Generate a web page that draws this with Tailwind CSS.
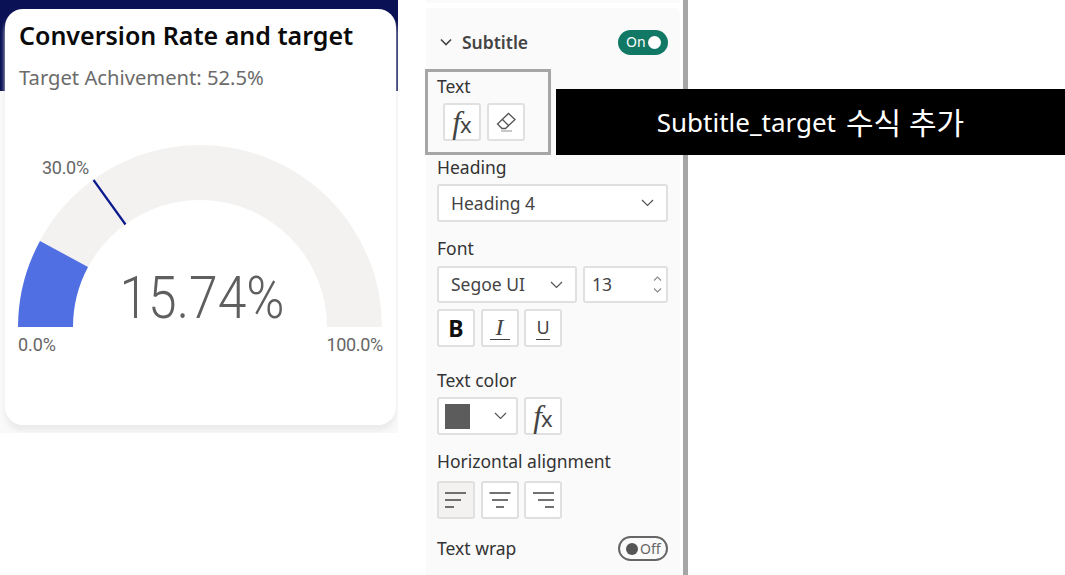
<!DOCTYPE html>
<html>
<head>
    <meta charset="UTF-8">
    <meta name="viewport" content="width=device-width, initial-scale=1.0">
    <title>Subtitle target</title>
    <script src="https://cdn.jsdelivr.net/npm/@tailwindcss/browser@4"></script>
</head>
<body class="bg-white">
<div class="relative w-[1065px] h-[575px] overflow-hidden flex font-['Noto_Sans','Noto_Sans_CJK_KR',sans-serif]">

    <!-- report visual -->
    <div class="w-[398px] h-[433px] overflow-hidden shrink-0 bg-[#f9f9f9] bg-[linear-gradient(#0a1155_91px,transparent_91px)] pt-[9px] pl-[5px]">
        <div class="w-[391px] h-[416px] bg-white rounded-[18px] shadow-[0_6px_4px_#ececec] overflow-hidden">
            <div class="pl-[14px] pt-[7px] text-[25px] leading-[38px] font-semibold text-[#0a0a0a] whitespace-nowrap">Conversion Rate and target</div>
            <div class="pl-[14px] mt-[9px] text-[20.2px] leading-[28px] text-[#6b6b6b] whitespace-nowrap">Target Achivement: 52.5%</div>
            <svg class="block mt-[-5px]" width="391" height="280" viewBox="5 86 391 280">
                <path d="M18 327 A182 182 0 0 1 382 327 L327 327 A127 127 0 0 0 73 327 Z" fill="#f3f2f1"/>
                <path d="M18 327 A182 182 0 0 1 40 241 L88 267 A127 127 0 0 0 73 327 Z" fill="#4f6fe3"/>
                <line x1="93.5" y1="180" x2="125.5" y2="224.5" stroke="#0b1a8c" stroke-width="2.2"/>
                <text x="42" y="174" font-size="18" fill="#666" font-family="Roboto" letter-spacing="-0.3">30.0%</text>
                <text x="18" y="351" font-size="18" fill="#666" font-family="Roboto" letter-spacing="-0.1">0.0%</text>
                <text x="383" y="351" font-size="18" fill="#666" font-family="Roboto" text-anchor="end" letter-spacing="-0.3">100.0%</text>
                <text x="202" y="318" font-size="60" font-weight="300" fill="#5f5f5f" font-family="Roboto" text-anchor="middle" textLength="165" lengthAdjust="spacingAndGlyphs">15.74%</text>
            </svg>
        </div>
    </div>

    <!-- format pane -->
    <div class="ml-[28px] w-[262px] h-full shrink-0 border-r-[5px] border-[#a6a6a6] bg-white text-[#333]">
        <div class="h-[3px] bg-[#fafafa] w-[254px]"></div>
        <div class="mt-[5px] w-[254px] h-[567px] bg-[#fafafa] rounded-tr-[6px] pl-[11px]">
            <div class="pt-[22px] h-[46px] w-[231px] flex items-center justify-between">
                <div class="flex items-center gap-[10px] pl-[3px]">
                    <svg width="12" height="8" viewBox="0 0 12 8" fill="none" stroke="#444" stroke-width="1.6"><path d="M1 1.5 L6 6.5 L11 1.5"/></svg>
                    <span class="text-[17.5px] font-semibold text-[#444] leading-[24px]">Subtitle</span>
                </div>
                <div class="w-[50px] h-[25px] rounded-full bg-[#117865] flex items-center justify-between pl-[8px] pr-[7px]">
                    <span class="text-[14px] leading-none text-white">On</span>
                    <span class="w-[13px] h-[13px] rounded-full bg-white"></span>
                </div>
            </div>

            <div class="mt-[15px] ml-[-12px] w-[126px] h-[86px] border-[3px] border-[#a6a6a6] pl-[9px] pt-[4px]">
                <div class="h-[20px] text-[17.5px] leading-[20px]">Text</div>
                <div class="mt-[7px] ml-[6px] flex gap-[6px]">
                    <button class="w-[38px] h-[38px] bg-white border-2 border-[#e0e0e0] rounded-[3px] flex items-center justify-center text-[#444]">
                        <span class="font-['Liberation_Serif'] italic text-[31px] leading-none">f</span><span class="text-[22px] leading-none mt-[4px] ml-[-1px]">x</span>
                    </button>
                    <button class="w-[38px] h-[38px] bg-white border-2 border-[#e0e0e0] rounded-[3px] flex items-center justify-center">
                        <svg width="24" height="24" viewBox="0 0 24 24" fill="none" stroke="#555" stroke-width="1.3"><path d="M14.5 3.5 L21 9.5 L11.5 18.5 H8 L3.5 14 Z M8.5 9.5 L15 16"/><path d="M7 21 H18" stroke="#aaa"/></svg>
                    </button>
                </div>
            </div>

            <div class="mt-[2px] h-[20px] text-[17.5px] leading-[20px]">Heading</div>
            <div class="mt-[7px] w-[231px] h-[38px] bg-white border-2 border-[#e0e0e0] rounded-[3px] flex items-center justify-between pl-[12px] pr-[12px]">
                <span class="text-[17.5px] text-[#444]">Heading 4</span>
                <svg width="13" height="8" viewBox="0 0 13 8" fill="none" stroke="#555" stroke-width="1.2"><path d="M1 1 L6.5 6.5 L12 1"/></svg>
            </div>

            <div class="mt-[16px] h-[20px] text-[17.5px] leading-[20px]">Font</div>
            <div class="mt-[8px] flex gap-[6px]">
                <div class="w-[140px] h-[37px] bg-white border-2 border-[#e0e0e0] rounded-[3px] flex items-center justify-between pl-[12px] pr-[12px]">
                    <span class="text-[17.5px] text-[#444]">Segoe UI</span>
                    <svg width="13" height="8" viewBox="0 0 13 8" fill="none" stroke="#555" stroke-width="1.2"><path d="M1 1 L6.5 6.5 L12 1"/></svg>
                </div>
                <div class="w-[85px] h-[37px] bg-white border-2 border-[#e0e0e0] rounded-[3px] flex items-center justify-between pl-[7px] pr-[4px]">
                    <span class="text-[17.5px] text-[#444]">13</span>
                    <div class="flex flex-col gap-[7px]">
                        <svg width="9" height="5" viewBox="0 0 9 5" fill="none" stroke="#888" stroke-width="1.1"><path d="M1 4.5 L4.5 1 L8 4.5"/></svg>
                        <svg width="9" height="5" viewBox="0 0 9 5" fill="none" stroke="#888" stroke-width="1.1"><path d="M1 .5 L4.5 4 L8 .5"/></svg>
                    </div>
                </div>
            </div>
            <div class="mt-[6px] flex gap-[5.5px]">
                <button class="w-[38px] h-[38px] bg-white border-2 border-[#e0e0e0] rounded-[3px] text-[23px] font-bold leading-none text-[#111]">B</button>
                <button class="w-[38px] h-[38px] bg-white border-2 border-[#e0e0e0] rounded-[3px] flex items-center justify-center text-[#444]">
                    <span class="w-[20px] h-[24px] border-b border-[#444] font-['Liberation_Serif'] italic text-[24px] leading-[22px] text-center">I</span>
                </button>
                <button class="w-[38px] h-[38px] bg-white border-2 border-[#e0e0e0] rounded-[3px] flex items-center justify-center text-[#444]">
                    <span class="w-[14px] h-[23px] border-b border-[#444] text-[18px] leading-[20px] text-center">U</span>
                </button>
            </div>

            <div class="mt-[23px] h-[20px] text-[17.5px] leading-[20px]">Text color</div>
            <div class="mt-[7px] flex gap-[6px]">
                <div class="w-[81px] h-[38px] bg-white border-2 border-[#e0e0e0] rounded-[3px] flex items-center justify-between pl-[6px] pr-[9px]">
                    <span class="w-[25px] h-[25px] bg-[#5c5c5c]"></span>
                    <svg width="13" height="8" viewBox="0 0 13 8" fill="none" stroke="#555" stroke-width="1.2"><path d="M1 1 L6.5 6.5 L12 1"/></svg>
                </div>
                <button class="w-[38px] h-[38px] bg-white border-2 border-[#e0e0e0] rounded-[3px] flex items-center justify-center text-[#444]">
                    <span class="font-['Liberation_Serif'] italic text-[31px] leading-none">f</span><span class="text-[22px] leading-none mt-[4px] ml-[-1px]">x</span>
                </button>
            </div>

            <div class="mt-[16px] h-[20px] text-[17.5px] leading-[20px] whitespace-nowrap">Horizontal alignment</div>
            <div class="mt-[10px] flex gap-[5.5px]">
                <button class="w-[38px] h-[38px] bg-[#f3f2f1] border-2 border-[#e0e0e0] rounded-[3px] flex items-center justify-center">
                    <svg width="24" height="18" viewBox="0 0 24 18" stroke="#444" stroke-width="1.6"><path d="M1 2 H22 M1 9 H17 M1 16 H10"/></svg>
                </button>
                <button class="w-[38px] h-[38px] bg-white border-2 border-[#e0e0e0] rounded-[3px] flex items-center justify-center">
                    <svg width="24" height="18" viewBox="0 0 24 18" stroke="#444" stroke-width="1.6"><path d="M1.5 2 H22.5 M4 9 H20 M8 16 H16"/></svg>
                </button>
                <button class="w-[38px] h-[38px] bg-white border-2 border-[#e0e0e0] rounded-[3px] flex items-center justify-center">
                    <svg width="24" height="18" viewBox="0 0 24 18" stroke="#444" stroke-width="1.6"><path d="M2 2 H23 M7 9 H23 M14 16 H23"/></svg>
                </button>
            </div>

            <div class="mt-[17px] w-[231px] h-[25px] flex items-center justify-between">
                <span class="text-[17.5px]">Text wrap</span>
                <div class="w-[50px] h-[25px] rounded-full border-2 border-[#666] flex items-center gap-[2px] pl-[6px]">
                    <span class="w-[12px] h-[12px] rounded-full bg-[#555]"></span>
                    <span class="text-[14px] leading-none text-[#666]">Off</span>
                </div>
            </div>
        </div>
    </div>

    <!-- callout over the pane -->
    <div class="absolute left-[556px] top-[89px] w-[509px] h-[66px] bg-black text-white flex items-center justify-center gap-[10px] text-[26px]">
        <span>Subtitle_target</span><span class="text-[30px]">수식 추가</span>
    </div>
</div>
</body>
</html>
